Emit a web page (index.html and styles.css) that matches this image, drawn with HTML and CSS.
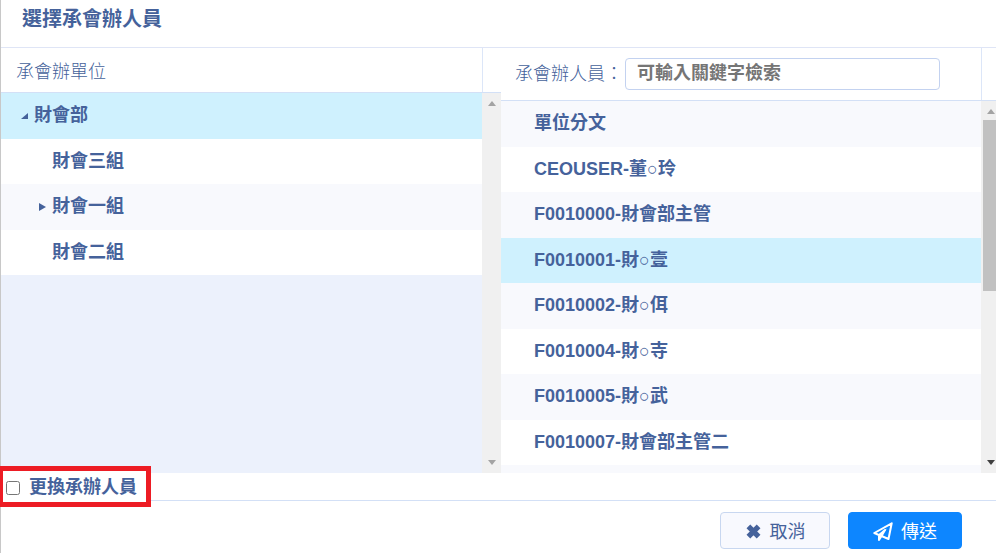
FILE: index.html
```html
<!DOCTYPE html>
<html lang="zh-Hant">
<head>
<meta charset="utf-8">
<title>選擇承會辦人員</title>
<link rel="stylesheet" href="styles.css">
</head>
<body>
<main class="dialog">
  <header class="dialog-header"><h1>選擇承會辦人員</h1></header>
  <div class="panels">
    <section class="panel">
      <div class="panel-head units-head"><h2>承會辦單位</h2></div>
      <div class="panel-body">
        <ul class="rows tree">
          <li class="row selected"><svg class="caret" viewBox="0 0 8 8"><path d="M8 1v6H1z"/></svg>財會部</li>
          <li class="row child">財會三組</li>
          <li class="row child"><svg class="caret" viewBox="0 0 8 8"><path d="M1 0l7 4-7 4z"/></svg>財會一組</li>
          <li class="row child">財會二組</li>
        </ul>
        <div class="scrollbar">
          <svg class="arrow" viewBox="0 0 8 5"><path d="M0 5l4-5 4 5z"/></svg>
          <svg class="arrow" viewBox="0 0 8 5"><path d="M0 0h8L4 5z"/></svg>
        </div>
      </div>
    </section>
    <section class="panel">
      <div class="panel-head people-head">
        <label for="keyword">承會辦人員：</label>
        <input id="keyword" class="search" type="text" placeholder="可輸入關鍵字檢索">
      </div>
      <div class="panel-body">
        <ul class="rows people">
          <li class="row">單位分文</li>
          <li class="row">CEOUSER-董○玲</li>
          <li class="row">F0010000-財會部主管</li>
          <li class="row selected">F0010001-財○壹</li>
          <li class="row">F0010002-財○佴</li>
          <li class="row">F0010004-財○寺</li>
          <li class="row">F0010005-財○武</li>
          <li class="row">F0010007-財會部主管二</li>
          <li class="row"></li>
        </ul>
        <div class="scrollbar cut">
          <svg class="arrow" viewBox="0 0 8 5"><path d="M0 5l4-5 4 5z"/></svg>
          <div class="thumb"></div>
          <svg class="arrow dark" viewBox="0 0 8 5"><path d="M0 0h8L4 5z"/></svg>
        </div>
      </div>
    </section>
  </div>
  <div class="option-bar">
    <label class="option"><input type="checkbox">更換承辦人員</label>
  </div>
  <footer class="actions">
    <button type="button" class="btn cancel">
      <svg class="icon-x" viewBox="0 0 16 16"><path d="M3.200 3.200l9.600 9.600M12.800 3.200l-9.600 9.600"/></svg>取消
    </button>
    <button type="button" class="btn send">
      <svg class="icon-send" viewBox="0 0 20 20"><path d="M18.700 1.300L1.300 11l4.700 2.200 6-5.200-3.500 6 7 3zM6 13.200V18l2.500-4"/><path class="fold" d="M1.300 11l4.700 2.200V18l2.500-4L14 6.500l-8 5.500z"/></svg>傳送
    </button>
  </footer>
</main>
</body>
</html>
```
FILE: styles.css
```css
* { box-sizing: border-box; }

body {
  margin: 0;
  background: #fff;
  color: #45629b;
  font: 18px/24px "Liberation Sans", "Noto Sans CJK TC", sans-serif;
}

h1, h2, ul { margin: 0; padding: 0; }

.dialog {
  display: flex;
  flex-direction: column;
  height: 100vh;
  border-left: 1px solid #c8c8c8;
}

.dialog-header {
  padding: 7px 21px 16px;
  border-bottom: 1px solid #dfe5f6;
}

.dialog-header h1 { font-size: 20px; line-height: 24px; }

.panels {
  flex: 1;
  min-height: 0;
  display: grid;
  grid-template-columns: 500fr 495fr;
}

.panel {
  display: flex;
  flex-direction: column;
  min-width: 0;
  min-height: 0;
}

.panel-head {
  display: flex;
  align-items: center;
  border-bottom: 1px solid #d3e0f6;
  font-weight: 300;
  background: linear-gradient(#dce6f8, #dce6f8) no-repeat;
  background-size: 1px 100%;
}

.units-head {
  height: 45px;
  padding: 3px 0 0 15px;
  background-position: right 18px top;
}

.units-head h2 { font-size: 18px; font-weight: 300; }

.people-head {
  height: 53px;
  padding: 0 56px 0 14px;
  background-position: right 14px top;
}

.search {
  flex: 1;
  min-width: 0;
  height: 32px;
  margin-left: 2px;
  padding: 0 11px 2px;
  border: 1px solid #c3d2f0;
  border-radius: 4px;
  background: #fff;
  color: #45629b;
  font: bold 18px/24px "Liberation Sans", "Noto Sans CJK TC", sans-serif;
}

.search::placeholder { color: #757575; opacity: 1; }

.panel-body {
  flex: 1;
  min-height: 0;
  display: flex;
}

.rows {
  flex: 1;
  min-width: 0;
  overflow: hidden;
  list-style: none;
  background: #ecf1fc;
  font-weight: bold;
}

.row {
  display: flex;
  align-items: center;
  height: 45px;
  padding-bottom: 2px;
  background: #fff;
}

.row:nth-child(odd) { height: 46px; background: #f8f9fd; }
.row.selected { background: #cff1fe; }

.tree .row { padding-left: 19px; }
.tree .child { padding-left: 51px; }
.tree .child:has(.caret) { padding-left: 37px; }
.people .row { padding-left: 33px; }

.caret {
  width: 8px;
  height: 8px;
  margin: 2px 6px 0 0;
  fill: #45629b;
}

.scrollbar {
  display: flex;
  flex-direction: column;
  align-items: center;
  justify-content: space-between;
  width: 19px;
  padding: 8px 0;
  background: #f0f0f0;
}

.arrow { width: 8px; height: 5px; fill: #a3a3a3; }
.arrow.dark { fill: #404040; }

.scrollbar.cut { width: 15px; align-items: flex-end; padding-right: 1px; }

.thumb {
  width: 13px;
  height: 171px;
  margin: 6px -1px auto;
  background: #c1c1c1;
}

.option-bar {
  display: flex;
  align-items: center;
  height: 28px;
  border-bottom: 1px solid #d3e0f6;
}

.option {
  display: flex;
  align-items: center;
  gap: 9px;
  height: 41px;
  margin: -6px 0 -6px -1px;
  padding: 0 9px 0 3px;
  border: 5px solid #ed1c24;
  border-left-width: 3px;
  background: #fff;
  font-weight: bold;
  z-index: 1;
}

.option input { width: 14px; height: 14px; margin: 2px 0 0; }

.actions {
  display: flex;
  justify-content: flex-end;
  gap: 18px;
  height: 52px;
  padding: 11px 34px 4px;
}

.btn {
  display: flex;
  align-items: center;
  justify-content: center;
  gap: 8px;
  min-width: 110px;
  padding: 2px 23px 0;
  border: 1px solid #c8d7f0;
  border-radius: 4px;
  background: #f8f9fe;
  color: #45629b;
  font: 18px/24px "Liberation Sans", "Noto Sans CJK TC", sans-serif;
}

.send { min-width: 114px; border-color: #0d86ff; background: #0d86ff; color: #fff; }

.icon-x { width: 17px; height: 17px; stroke: #45629b; stroke-width: 5; fill: none; }
.icon-send { width: 20px; height: 20px; stroke: #fff; stroke-width: 2; stroke-linejoin: round; fill: none; }
.icon-send .fold { fill: #fff; stroke: none; }
```
